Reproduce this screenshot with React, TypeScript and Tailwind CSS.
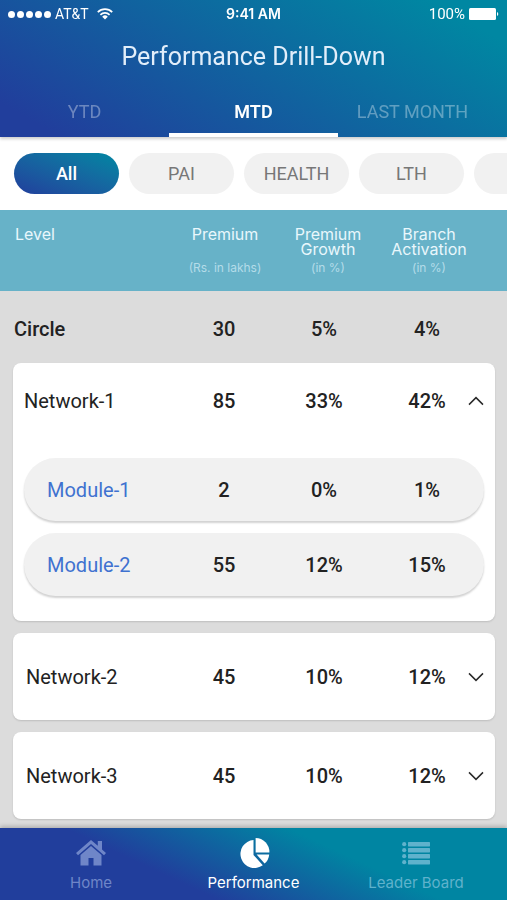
import { useState } from "react";

type Values = [string, string, string];
type Network = { name: string; values: Values; modules?: { name: string; values: Values }[] };

const tabs = ["YTD", "MTD", "LAST MONTH"];
const chips = ["All", "PAI", "HEALTH", "LTH", ""];

const networks: Network[] = [
  {
    name: "Network-1",
    values: ["85", "33%", "42%"],
    modules: [
      { name: "Module-1", values: ["2", "0%", "1%"] },
      { name: "Module-2", values: ["55", "12%", "15%"] },
    ],
  },
  { name: "Network-2", values: ["45", "10%", "12%"] },
  { name: "Network-3", values: ["45", "10%", "12%"] },
];

const rowGrid = "grid grid-cols-[1fr_102px_100px_94px_16px] items-center";

function StatusBar() {
  return (
    <div className="grid h-7 grid-cols-3 items-center px-2 text-[14px] leading-4">
      <div className="flex items-center gap-1">
        <span className="flex gap-[2px]">
          {[0, 1, 2, 3, 4].map((dot) => (
            <span key={dot} className="size-[7px] rounded-full bg-white" />
          ))}
        </span>
        <span>AT&amp;T</span>
        <svg viewBox="0 0 16 12" className="ml-1 h-3 w-4" fill="none" stroke="white" aria-hidden="true">
          <path d="M0.8 4.2a10.2 10.2 0 0 1 14.4 0" strokeWidth="1.7" />
          <path d="M3.4 6.8a6.5 6.5 0 0 1 9.2 0" strokeWidth="1.7" />
          <path d="M8 11.6 5.2 8.7a4 4 0 0 1 5.6 0z" fill="white" stroke="none" />
        </svg>
      </div>
      <span className="text-center font-['Inter',sans-serif] text-[14px] font-semibold">9:41 AM</span>
      <div className="flex items-center justify-end gap-1">
        <span className="text-[15px]">100%</span>
        <svg viewBox="0 0 30 12" className="h-3 w-[30px]" fill="white" aria-hidden="true">
          <rect x="0" y="0" width="27" height="12" rx="1.5" />
          <path d="M28 4a2.2 2.2 0 0 1 0 4z" />
        </svg>
      </div>
    </div>
  );
}

function ValueCells({ values }: { values: Values }) {
  return (
    <>
      <td className="pl-[2px] text-center font-medium">{values[0]}</td>
      <td className="text-center font-medium">{values[1]}</td>
      <td className="pl-3 text-center font-medium">{values[2]}</td>
    </>
  );
}

function Chevron({ open }: { open: boolean }) {
  return (
    <svg viewBox="0 0 16 10" className="h-[10px] w-4" fill="none" stroke="#2a2a2a" strokeWidth="1.5" aria-hidden="true">
      <path d={open ? "M1 8.6 8 1.6l7 7" : "M1 1.4l7 7 7-7"} />
    </svg>
  );
}

function NetworkCard({ network, open, onToggle }: { network: Network; open: boolean; onToggle: () => void }) {
  const expanded = open && !!network.modules;
  return (
    <tbody className="mr-3 mb-3 ml-[13px] block rounded-lg bg-white pr-[11px] pl-[11px] shadow-[0_1px_2px_rgba(0,0,0,0.14)]">
      <tr className={`${rowGrid} ${expanded ? "h-[75px]" : "h-[87px] pl-[2px]"}`}>
        <th scope="row" className="text-left font-normal">{network.name}</th>
        <ValueCells values={network.values} />
        <td className="flex">
          <button
            type="button"
            aria-expanded={open}
            aria-label={`Toggle ${network.name}`}
            onClick={onToggle}
            className="flex h-6 w-4 items-center"
          >
            <Chevron open={open} />
          </button>
        </td>
      </tr>
      {expanded && (
        <tr className="block pt-5 pb-[25px]">
          <td className="block">
            <table className="flex flex-col">
              <tbody className="flex flex-col gap-3">
                {network.modules!.map((m) => (
                  <tr
                    key={m.name}
                    className={`${rowGrid} h-[63px] rounded-full bg-[#f1f1f1] shadow-[0_2px_2px_rgba(0,0,0,0.18)]`}
                  >
                    <th scope="row" className="pl-[23px] text-left font-normal text-[#3f72d0]">{m.name}</th>
                    <ValueCells values={m.values} />
                  </tr>
                ))}
              </tbody>
            </table>
          </td>
        </tr>
      )}
    </tbody>
  );
}

function HomeIcon() {
  return (
    <svg viewBox="0 0 30 26" className="h-[26px] w-[30px]" fill="currentColor" aria-hidden="true">
      <path d="M15 0 0 13l2 2.2L15 4l13 11.2 2-2.2-4-3.5V1h-4.2v4.8z" />
      <path d="M15 6 4.5 15v10.5h8V18h5v7.5h8V15z" />
    </svg>
  );
}

function PieIcon() {
  return (
    <svg viewBox="0 0 32 32" className="size-8" fill="currentColor" aria-hidden="true">
      <path d="M15.5 3A14 14 0 1 0 24.8 28.2L15.5 18z" />
      <path d="M17.6 1v14.4H31.4A14 14 0 0 0 17.6 1z" />
      <path d="M18.6 17.4H31.2a14 14 0 0 1-4.6 9.2z" />
    </svg>
  );
}

function ListIcon() {
  return (
    <svg viewBox="0 0 28 23" className="h-[23px] w-7" fill="currentColor" aria-hidden="true">
      {[0, 6, 12, 18].map((y) => (
        <g key={y}>
          <circle cx="2.2" cy={y + 2.2} r="2.1" />
          <rect x="6" y={y} width="22" height="4.4" rx="0.6" />
        </g>
      ))}
    </svg>
  );
}

export default function App() {
  const [tab, setTab] = useState("MTD");
  const [chip, setChip] = useState("All");
  const [open, setOpen] = useState<string | null>("Network-1");

  return (
    <div className="flex min-h-screen flex-col bg-[#dcdcdc] font-['Roboto',sans-serif] text-[#222222]">
      <header className="relative bg-[linear-gradient(30deg,#213e9c_8%,#0087a2_90%)] text-white shadow-[0_2px_3px_rgba(0,0,0,0.2)]">
        <StatusBar />
        <h1 className="pt-[13px] text-center text-[25px] leading-8 text-[#e2eefa]">Performance Drill-Down</h1>
        <nav className="grid grid-cols-3 pt-[15px]" aria-label="Period">
          {tabs.map((t) => (
            <button
              key={t}
              type="button"
              onClick={() => setTab(t)}
              className={`h-[49px] border-b-4 pt-[2px] text-[18px] leading-6 last:pr-5 ${
                t === tab ? "border-white font-semibold text-white" : "border-transparent text-white/35"
              }`}
            >
              {t}
            </button>
          ))}
        </nav>
      </header>

      <div className="flex gap-[10px] overflow-x-auto bg-white px-[14px] py-4 [scrollbar-width:none]">
        {chips.map((c) => (
          <button
            key={c}
            type="button"
            aria-label={c || "More"}
            onClick={() => setChip(c)}
            className={`h-[41px] w-[105px] shrink-0 rounded-full text-[18px] leading-6 ${
              c === chip
                ? "bg-linear-to-tr from-[#213e9c] to-[#0087a2] font-medium text-white"
                : "bg-[#f1f1f1] text-[#777777]"
            }`}
          >
            {c}
          </button>
        ))}
      </div>

      <table className="block text-[20px] leading-6">
        <thead className="block h-[81px] bg-[#67b2c8] pt-4 pr-[23px] pl-[15px] font-['Inter',sans-serif] text-[16px] leading-[15px] text-[#e9f7fc]">
          <tr className={`${rowGrid} h-[49px]`}>
            <th scope="col" className="self-start pt-px text-left font-normal">Level</th>
            <th scope="col" className="flex h-full flex-col justify-between pt-px pl-1 font-normal">
              Premium
              <span className="text-[12px] text-[#b4dce8]">(Rs. in lakhs)</span>
            </th>
            <th scope="col" className="flex h-full flex-col justify-between pt-px pl-2 font-normal">
              Premium Growth
              <span className="text-[12px] text-[#b4dce8]">(in %)</span>
            </th>
            <th scope="col" className="flex h-full flex-col justify-between pt-px pl-4 font-normal">
              Branch Activation
              <span className="text-[12px] text-[#b4dce8]">(in %)</span>
            </th>
          </tr>
        </thead>
        <tbody className="block pr-[23px] pl-[14px]">
          <tr className={`${rowGrid} h-[72px] pt-1`}>
            <th scope="row" className="text-left font-medium">Circle</th>
            <ValueCells values={["30", "5%", "4%"]} />
          </tr>
        </tbody>
        {networks.map((n) => (
          <NetworkCard
            key={n.name}
            network={n}
            open={open === n.name}
            onToggle={() => setOpen(open === n.name ? null : n.name)}
          />
        ))}
      </table>

      <nav
        aria-label="Main"
        className="sticky bottom-0 -mt-[3px] grid h-[72px] shrink-0 grid-cols-[182px_1fr_182px] bg-[linear-gradient(25deg,#213e9c_33%,#0085a2_67%)] font-['Inter',sans-serif] text-[15px] leading-5 shadow-[0_-2px_4px_rgba(0,0,0,0.2)]"
      >
        <a href="#home" className="flex flex-col items-center justify-end pb-[7px] text-[#6f86c8]">
          <span className="flex h-9 items-start pt-[3px]"><HomeIcon /></span>
          Home
        </a>
        <a href="#performance" className="flex flex-col items-center justify-end pb-[7px] text-white">
          <span className="flex h-9 items-start"><PieIcon /></span>
          Performance
        </a>
        <a href="#leader-board" className="flex flex-col items-center justify-end pb-[7px] text-[#5fb2cc]">
          <span className="flex h-9 items-start pt-[5px]"><ListIcon /></span>
          Leader Board
        </a>
      </nav>
    </div>
  );
}
